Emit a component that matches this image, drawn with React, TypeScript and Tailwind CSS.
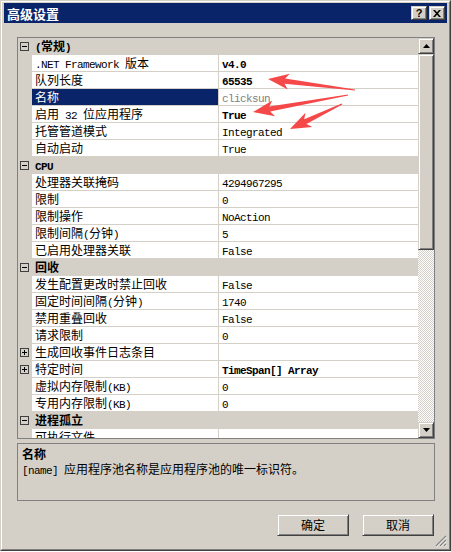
import React from "react";

type Row =
  | { kind: "cat"; label: string }
  | { kind: "prop"; name: string; value?: string; bold?: boolean; sel?: boolean; dim?: boolean; expand?: boolean };

const rows: Row[] = [
  { kind: "cat", label: "(常规)" },
  { kind: "prop", name: ".NET Framework 版本", value: "v4.0", bold: true },
  { kind: "prop", name: "队列长度", value: "65535", bold: true },
  { kind: "prop", name: "名称", value: "clicksun", sel: true, dim: true },
  { kind: "prop", name: "启用 32 位应用程序", value: "True", bold: true },
  { kind: "prop", name: "托管管道模式", value: "Integrated" },
  { kind: "prop", name: "自动启动", value: "True" },
  { kind: "cat", label: "CPU" },
  { kind: "prop", name: "处理器关联掩码", value: "4294967295" },
  { kind: "prop", name: "限制", value: "0" },
  { kind: "prop", name: "限制操作", value: "NoAction" },
  { kind: "prop", name: "限制间隔(分钟)", value: "5" },
  { kind: "prop", name: "已启用处理器关联", value: "False" },
  { kind: "cat", label: "回收" },
  { kind: "prop", name: "发生配置更改时禁止回收", value: "False" },
  { kind: "prop", name: "固定时间间隔(分钟)", value: "1740" },
  { kind: "prop", name: "禁用重叠回收", value: "False" },
  { kind: "prop", name: "请求限制", value: "0" },
  { kind: "prop", name: "生成回收事件日志条目", expand: true },
  { kind: "prop", name: "特定时间", value: "TimeSpan[] Array", bold: true, expand: true },
  { kind: "prop", name: "虚拟内存限制(KB)", value: "0" },
  { kind: "prop", name: "专用内存限制(KB)", value: "0" },
  { kind: "cat", label: "进程孤立" },
  { kind: "prop", name: "可执行文件", value: "" },
];

// ascii runs get the narrow mono face, the rest stays CJK
function Txt({ s }: { s: string }) {
  return (
    <>
      {s
        .split(/([\x20-\x7e]+)/)
        .filter(Boolean)
        .map((p, i) =>
          /^[\x20-\x7e]+$/.test(p) ? (
            <span key={i} className="font-['Liberation_Mono',monospace] text-[11px] tracking-[-0.6px] whitespace-pre">
              {p}
            </span>
          ) : (
            <span key={i}>{p}</span>
          )
        )}
    </>
  );
}

const raised =
  "border border-t-[#d4d0c8] border-l-[#d4d0c8] border-r-[#404040] border-b-[#404040] shadow-[inset_1px_1px_#fff,inset_-1px_-1px_#808080] bg-[#d4d0c8]";

function Box({ plus }: { plus?: boolean }) {
  return (
    <svg width="9" height="9" viewBox="0 0 9 9" className="block">
      <rect x="0.5" y="0.5" width="8" height="8" fill="none" stroke="#404040" />
      <path d="M2 4.5h5" stroke="#000" />
      {plus && <path d="M4.5 2v5" stroke="#000" />}
    </svg>
  );
}

function arrowPts(x1: number, y1: number, x2: number, y2: number) {
  const dx = x2 - x1;
  const dy = y2 - y1;
  const L = Math.hypot(dx, dy);
  const ux = dx / L;
  const uy = dy / L;
  const nx = -uy;
  const ny = ux;
  const hl = 17;
  const hw = 8;
  const bx = x2 - ux * hl;
  const by = y2 - uy * hl;
  const p = [
    [x1 + nx * 0.6, y1 + ny * 0.6],
    [bx + nx * 2.6, by + ny * 2.6],
    [bx - ux * 4 + nx * hw, by - uy * 4 + ny * hw],
    [x2, y2],
    [bx - ux * 4 - nx * hw, by - uy * 4 - ny * hw],
    [bx - nx * 2.6, by - ny * 2.6],
    [x1 - nx * 0.6, y1 - ny * 0.6],
  ];
  return p.map((q) => q.map((v) => v.toFixed(1)).join(",")).join(" ");
}

function GridRow({ r }: { r: Row }) {
  if (r.kind === "cat") {
    return (
      <div className="flex h-[17px] bg-[#d4d0c8] font-bold">
        <div className="flex w-[14px] items-center pl-[2px]">
          <Box />
        </div>
        <div className="pl-[3px] leading-[16px]">
          <Txt s={r.label} />
        </div>
      </div>
    );
  }
  return (
    <div className="flex h-[17px]">
      <div className="flex w-[14px] items-center bg-[#d4d0c8] pl-[2px]">{r.expand && <Box plus />}</div>
      <div
        className={`w-[187px] border-b border-r border-[#d4d0c8] pl-[3px] leading-[16px] whitespace-nowrap ${
          r.sel ? "bg-[#0a246a] text-white" : "bg-white"
        }`}
      >
        <Txt s={r.name} />
      </div>
      <div
        className={`flex-1 border-b border-[#d4d0c8] bg-white pl-[3px] leading-[16px] ${r.bold ? "font-bold" : ""} ${
          r.dim ? "text-[#808080]" : ""
        }`}
      >
        <Txt s={r.value ?? ""} />
      </div>
    </div>
  );
}

export default function App() {
  return (
    <div className="relative h-[551px] w-[451px] border border-t-[#d4d0c8] border-l-[#d4d0c8] border-r-[#404040] border-b-[#404040] bg-[#d4d0c8] font-['Noto_Sans_CJK_SC',sans-serif] text-[12px] text-black">
      <div className="h-full border border-t-white border-l-white border-r-[#808080] border-b-[#808080] px-[2px] pt-[1px]">
        {/* title bar */}
        <div className="flex h-[20px] items-center justify-between bg-[#0a246a] pl-[3px] pr-[2px]">
          <span className="text-[13px] font-bold leading-none text-white">高级设置</span>
          <div className="flex gap-[2px]">
            <div className={`flex h-[14px] w-[16px] items-center justify-center ${raised}`}>
              <span className="font-['Liberation_Sans',sans-serif] text-[11px] font-bold leading-none">?</span>
            </div>
            <div className={`flex h-[14px] w-[16px] items-center justify-center ${raised}`}>
              <svg width="8" height="7" viewBox="0 0 8 7">
                <path d="M0 0h2l2 2.2 2-2.2h2L5 3.5 8 7H6L4 4.8 2 7H0l3-3.5z" fill="#000" />
              </svg>
            </div>
          </div>
        </div>

        <div className="pl-[13px]">
          {/* property grid */}
          <div className="mt-[14px] flex h-[402px] w-[418px] border border-[#808080] bg-white">
            <div className="w-[400px] overflow-hidden">
              {rows.map((r, i) => (
                <GridRow key={i} r={r} />
              ))}
            </div>
            <div className="flex w-[16px] flex-col">
              <div className={`flex h-[16px] items-center justify-center ${raised}`}>
                <svg width="7" height="4" viewBox="0 0 7 4">
                  <path d="M3.5 0L7 4H0z" fill="#000" />
                </svg>
              </div>
              <div className={`h-[196px] ${raised}`} />
              <div className="flex-1 bg-[repeating-conic-gradient(#ffffff_0_25%,#d4d0c8_0_50%)] bg-[length:2px_2px]" />
              <div className={`flex h-[16px] items-center justify-center ${raised}`}>
                <svg width="7" height="4" viewBox="0 0 7 4">
                  <path d="M0 0h7L3.5 4z" fill="#000" />
                </svg>
              </div>
            </div>
          </div>

          {/* description */}
          <div className="mt-[4px] h-[58px] w-[418px] border border-[#808080] px-[4px] pt-[2px] leading-[15px]">
            <div className="font-bold">名称</div>
            <div>
              <Txt s="[name] " />
              应用程序池名称是应用程序池的唯一标识符。
            </div>
          </div>

          {/* buttons */}
          <div className="mt-[13px] flex w-[418px] justify-end gap-[13px] pr-px">
            <button className={`h-[22px] w-[72px] ${raised}`}>确定</button>
            <button className={`h-[22px] w-[72px] ${raised}`}>取消</button>
          </div>
        </div>
      </div>

      {/* size grip */}
      <svg width="12" height="12" viewBox="0 0 12 12" className="absolute bottom-[3px] right-[3px]">
        <path d="M11 1L1 11M11 5L5 11M11 9L9 11" stroke="#808080" strokeWidth="1.2" />
        <path d="M12 1.5L1.5 12M12 5.5L5.5 12M12 9.5L9.5 12" stroke="#fff" strokeWidth="0.8" />
      </svg>

      {/* red annotation arrows */}
      <svg width="451" height="552" className="pointer-events-none absolute left-[-1px] top-[-1px]">
        <polygon points={arrowPts(355, 90, 268, 79)} fill="#f54848" />
        <polygon points={arrowPts(348, 95, 253, 112)} fill="#f54848" />
        <polygon points={arrowPts(342, 104, 290, 129)} fill="#f54848" />
      </svg>
    </div>
  );
}
